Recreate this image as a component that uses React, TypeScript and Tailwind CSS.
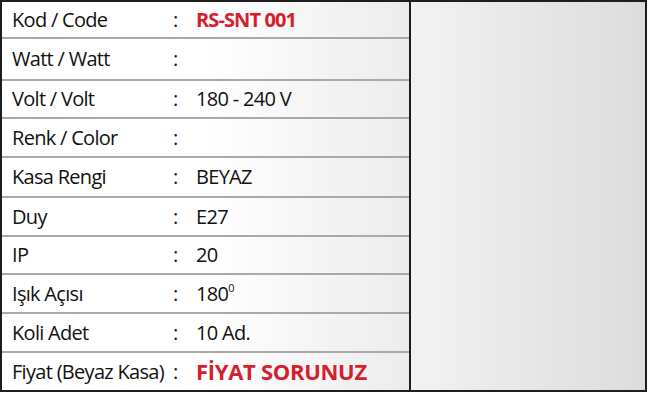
const rows = [
  { label: 'Kod / Code', value: 'RS-SNT 001', red: 'text-[20px] tracking-[-0.9px]', h: 'h-[37px]' },
  { label: 'Watt / Watt', value: '', h: 'h-[42px]' },
  { label: 'Volt / Volt', value: '180 - 240 V', h: 'h-[38px]' },
  { label: 'Renk / Color', value: '', h: 'h-[39px]' },
  { label: 'Kasa Rengi', value: 'BEYAZ', h: 'h-[40px]' },
  { label: 'Duy', value: 'E27', h: 'h-[39px]' },
  { label: 'IP', value: '20', h: 'h-[38px]' },
  { label: 'Işık Açısı', value: 'deg', h: 'h-[39px]' },
  { label: 'Koli Adet', value: '10 Ad.', h: 'h-[39px]' },
  { label: 'Fiyat (Beyaz Kasa)', value: 'FİYAT SORUNUZ', red: 'text-[22px] tracking-[-0.3px]', h: 'h-[37px]' },
];

export default function App() {
  return (
    <div className="w-[651px] h-[400px] bg-white" style={{ fontFamily: '"Open Sans", "Noto Sans", sans-serif' }}>
      <div className="w-[647px] h-[392px] border-2 border-[#1e1e1e] flex">
        <div className="w-[409px] border-r-2 border-[#1e1e1e] flex flex-col bg-gradient-to-r from-white via-white to-[#ececec]">
          {rows.map((r, i) => (
            <div
              key={i}
              className={`${r.h} flex items-center text-[20px] tracking-[-0.7px] text-[#111] ${i < rows.length - 1 ? 'border-b-2 border-[#a9a9a9]' : ''}`}
            >
              <span className="w-[160px] pl-[10px] whitespace-nowrap">{r.label}</span>
              <span className="w-[34px] pl-[11px]">:</span>
              <span className={r.red ? `text-[#d4202c] font-bold whitespace-nowrap ${r.red}` : ''}>
                {r.value === 'deg' ? (
                  <>
                    180<sup className="text-[11px] -top-[0.75em]">0</sup>
                  </>
                ) : (
                  r.value
                )}
              </span>
            </div>
          ))}
        </div>
        <div className="flex-1 bg-gradient-to-r from-[#f2f2f2] to-[#dcdcdc]" />
      </div>
    </div>
  );
}
